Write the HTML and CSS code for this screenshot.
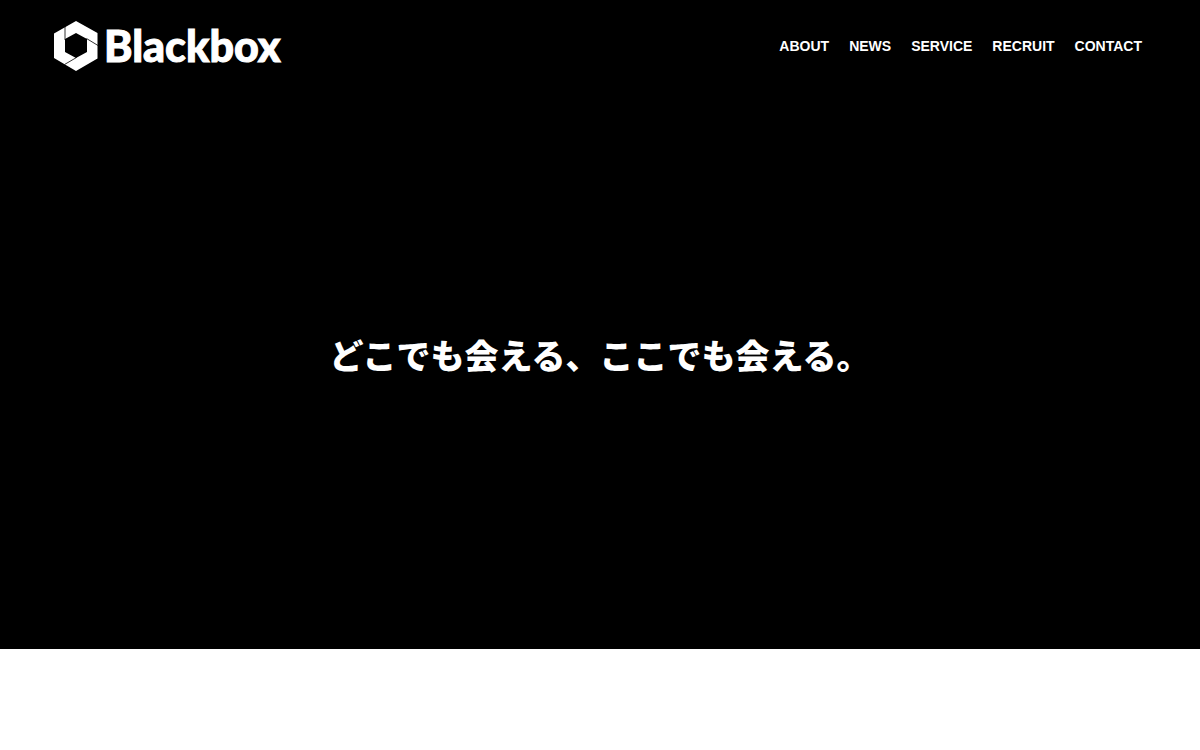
FILE: index.html
```
<!DOCTYPE html>
<html lang="ja">
<head>
    <meta charset="UTF-8">
    <meta name="viewport" content="width=device-width, initial-scale=1.0">
    <title>Blackbox</title>
    <link rel="stylesheet" href="styles.css">
</head>
<body>
    <div class="hero">
        <header class="header">
            <a href="#" class="logo">
                <svg class="logo-mark" viewBox="0 0 44 50" aria-hidden="true">
                    <path fill="#fff" fill-rule="evenodd" d="M22 0L43.5 12V37.5L22 50L0 37V12.5ZM22 12L11 18V31L22 37L33 31V18Z"/>
                    <path fill="none" stroke="#000" stroke-width="0.8" d="M11 19V5M32.5 17.5L44 24.5M22.5 36.5L10.5 43.5"/>
                </svg>
                <span class="logo-text">Blackbox</span>
            </a>
            <nav>
                <ul class="nav-list">
                    <li><a href="#about">ABOUT</a></li>
                    <li><a href="#news">NEWS</a></li>
                    <li><a href="#service">SERVICE</a></li>
                    <li><a href="#recruit">RECRUIT</a></li>
                    <li><a href="#contact">CONTACT</a></li>
                </ul>
            </nav>
        </header>
        <main class="catch">
            <h1>どこでも会える、ここでも会える。</h1>
        </main>
    </div>
</body>
</html>
```
FILE: styles.css
```
* {
    margin: 0;
    padding: 0;
    box-sizing: border-box;
}

body {
    background-color: #fff;
    color: #fff;
    font-family: "Liberation Sans", Arial, sans-serif;
}

a {
    color: #fff;
    text-decoration: none;
}

/* メインビジュアル */
.hero {
    display: flex;
    flex-direction: column;
    min-height: calc(100vh - 101px);
    background-color: #000;
}

/* ヘッダー */
.header {
    display: flex;
    justify-content: space-between;
    align-items: center;
    height: 92px;
    padding: 0 58px 0 54px;
}

.logo {
    display: flex;
    align-items: center;
    gap: 6px;
}

.logo-mark {
    width: 44px;
    height: 50px;
}

.logo-text {
    font-family: Lato, sans-serif;
    font-size: 43px;
    font-weight: 900;
    line-height: 50px;
    -webkit-text-stroke: 1px #fff;
}

.nav-list {
    display: flex;
    gap: 20px;
    list-style: none;
    font-size: 14px;
    font-weight: bold;
}

/* キャッチコピー */
.catch {
    flex: 1;
    display: flex;
    justify-content: center;
    align-items: center;
    padding: 0 20px 32px;
}

.catch h1 {
    font-family: "Noto Sans CJK JP", sans-serif;
    font-size: 34px;
    font-weight: 900;
    line-height: 50px;
}
```
